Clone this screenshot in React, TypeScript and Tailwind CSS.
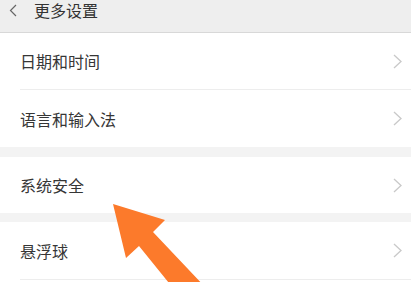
import React from 'react';

const font = { fontFamily: '"Noto Sans CJK SC", "Noto Sans", sans-serif' };

function Chevron() {
  return (
    <svg width="9" height="15" viewBox="0 0 9 15" fill="none" className="shrink-0">
      <polyline points="1,1 8,7.5 1,14" stroke="#c9c9c9" strokeWidth="1.3" strokeLinejoin="miter" />
    </svg>
  );
}

function Row({ label, divider, h }: { label: string; divider?: boolean; h: string }) {
  return (
    <div className="bg-white pl-5">
      <div className={`flex items-center justify-between pr-[9px] ${h} ${divider ? 'border-b border-[#ededed]' : ''}`}>
        <span className="text-[16px] text-[#363636] leading-none">{label}</span>
        <Chevron />
      </div>
    </div>
  );
}

export default function App() {
  return (
    <div className="relative w-[411px] h-[282px] overflow-hidden bg-[#f3f3f3]" style={font}>
      <div className="h-[33px] bg-[#eeeeee] border-b border-[#d8d8d8] flex items-start">
        <div className="flex items-center h-[20px]">
          <div className="w-[34px] pl-[9px] flex items-center">
            <svg width="8" height="13" viewBox="0 0 8 13" fill="none">
              <polyline points="7,1 1.5,6.5 7,12" stroke="#666" strokeWidth="1.2" />
            </svg>
          </div>
          <span className="text-[16px] text-[#333] leading-[20px]">更多设置</span>
        </div>
      </div>

      <Row label="日期和时间" divider h="h-[57px]" />
      <Row label="语言和输入法" h="h-[57px]" />

      <div className="h-[10px]" />
      <Row label="系统安全" h="h-[56px]" />

      <div className="h-[9px]" />
      <Row label="悬浮球" divider h="h-[58px]" />
      <div className="bg-white h-[10px]" />

      <svg className="absolute inset-0 pointer-events-none" width="411" height="282" viewBox="0 0 411 282">
        <polygon
          points="113,204 165,220 153,232 206,288 173,288 139,246 126,258"
          fill="#fc7a2b"
        />
      </svg>
    </div>
  );
}
